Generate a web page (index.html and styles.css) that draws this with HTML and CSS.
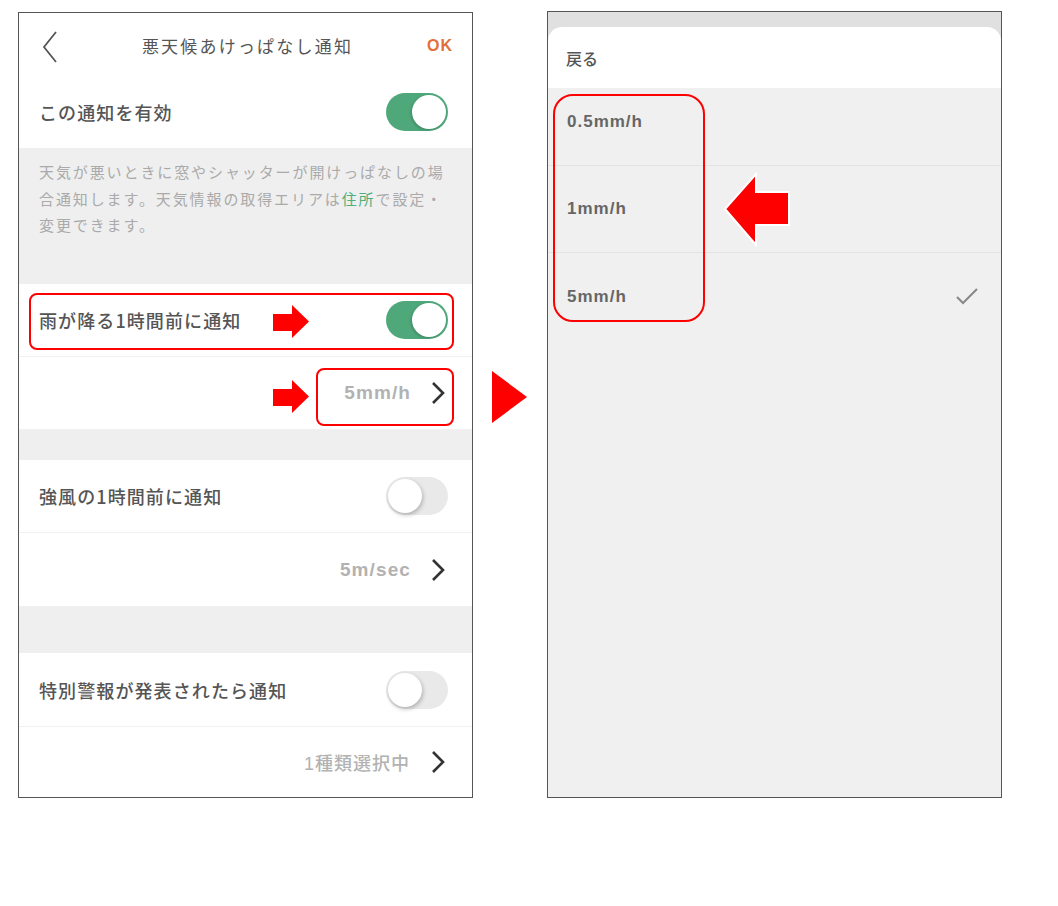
FILE: index.html
```html
<!DOCTYPE html>
<html lang="ja">
<head>
  <meta charset="UTF-8">
  <meta name="viewport" content="width=device-width, initial-scale=1.0">
  <title>悪天候あけっぱなし通知</title>
  <link rel="stylesheet" href="styles.css">
</head>
<body>
  <div class="page">
    <div class="phone settings">
      <header class="nav">
        <svg class="nav-back" width="16" height="32" viewBox="0 0 16 32"><polyline points="14,1 2,16 14,31" fill="none" stroke="#555" stroke-width="1.8"/></svg>
        <h1 class="nav-title">悪天候あけっぱなし通知</h1>
        <span class="nav-ok">OK</span>
      </header>

      <div class="row row-main">
        <span class="row-label">この通知を有効</span>
        <span class="switch is-on"></span>
      </div>

      <p class="note">天気が悪いときに窓やシャッターが開けっぱなしの場<br>合通知します。天気情報の取得エリアは<span class="note-link">住所</span>で設定・<br>変更できます。</p>

      <section class="group group-rain">
        <div class="row">
          <span class="row-label">雨が降る1時間前に通知</span>
          <span class="switch is-on"></span>
        </div>
        <div class="row row-value">
          <span class="value">5mm/h</span>
          <svg class="chev" width="14" height="24" viewBox="0 0 14 24"><polyline points="2,2 12,12 2,22" fill="none" stroke="#333" stroke-width="2.6"/></svg>
        </div>
        <span class="mark mark-row"></span>
        <span class="mark mark-value"></span>
        <svg class="pointer pointer-row" width="36" height="34" viewBox="0 0 36 34"><polygon points="0,9 19,9 19,0 36,16.5 19,33 19,26 0,26" fill="#f00"/></svg>
        <svg class="pointer pointer-value" width="36" height="34" viewBox="0 0 36 34"><polygon points="0,9 19,9 19,0 36,16.5 19,33 19,26 0,26" fill="#f00"/></svg>
      </section>

      <div class="spacer spacer-sm"></div>

      <section class="group">
        <div class="row">
          <span class="row-label">強風の1時間前に通知</span>
          <span class="switch"></span>
        </div>
        <div class="row row-value">
          <span class="value">5m/sec</span>
          <svg class="chev" width="14" height="24" viewBox="0 0 14 24"><polyline points="2,2 12,12 2,22" fill="none" stroke="#333" stroke-width="2.6"/></svg>
        </div>
      </section>

      <div class="spacer spacer-lg"></div>

      <section class="group group-last">
        <div class="row">
          <span class="row-label">特別警報が発表されたら通知</span>
          <span class="switch"></span>
        </div>
        <div class="row row-value">
          <span class="value value-jp">1種類選択中</span>
          <svg class="chev" width="14" height="24" viewBox="0 0 14 24"><polyline points="2,2 12,12 2,22" fill="none" stroke="#333" stroke-width="2.6"/></svg>
        </div>
      </section>
    </div>

    <div class="flow">
      <svg width="36" height="53" viewBox="0 0 36 53"><polygon points="0,0 35,26 0,52" fill="#f00"/></svg>
    </div>

    <div class="phone picker">
      <div class="picker-top">
        <div class="sheet">戻る</div>
      </div>
      <ul class="options">
        <li class="option option-first">0.5mm/h</li>
        <li class="option">1mm/h</li>
        <li class="option option-last">5mm/h
          <svg class="check" width="22" height="17" viewBox="0 0 22 17"><polyline points="1,9 7,15 21,1" fill="none" stroke="#888" stroke-width="2"/></svg>
        </li>
        <span class="mark mark-options"></span>
        <svg class="pointer pointer-back" width="68" height="75" viewBox="0 0 68 75"><polygon points="2,37 33,2 33,20 66,20 66,53 33,53 33,73" fill="#f00" stroke="#fff" stroke-width="2"/></svg>
      </ul>
    </div>
  </div>
</body>
</html>
```

FILE: styles.css
```css
body {
  margin: 0;
  background: #fff;
  font-family: "Liberation Sans", "Noto Sans CJK JP", sans-serif;
  color: #555;
}

.page {
  display: flex;
  align-items: flex-start;
  padding: 11px 0 0 18px;
}

.phone {
  box-sizing: border-box;
  width: 455px;
  border: 1px solid #555;
  overflow: hidden;
}

/* left screen */

.settings {
  height: 786px;
  margin-top: 1px;
  background: #fff;
}

.nav {
  height: 67px;
  display: grid;
  grid-template-columns: 1fr auto 1fr;
  align-items: center;
  padding: 0 19px 0 23px;
}

.nav-back {
  display: block;
}

.nav-title {
  margin: 0 0 2px;
  font-family: "Noto Sans CJK JP", sans-serif;
  font-size: 17px;
  font-weight: 400;
  letter-spacing: 2.2px;
  color: #555;
}

.nav-ok {
  justify-self: end;
  margin-bottom: 2px;
  font-size: 16px;
  font-weight: bold;
  color: #e0703c;
  letter-spacing: 1px;
}

.row {
  box-sizing: border-box;
  height: 73px;
  display: flex;
  align-items: center;
  justify-content: space-between;
  padding: 0 24px 0 20px;
  border-bottom: 1px solid #f1f1f1;
}

.row:last-child {
  border-bottom: none;
}

.row-main {
  height: 68px;
  padding-bottom: 4px;
  border-bottom: none;
}

.row-label {
  font-family: "Noto Sans CJK JP", sans-serif;
  font-size: 18px;
  font-weight: 500;
  letter-spacing: 1.1px;
  color: #555;
}

.row-value {
  justify-content: flex-end;
  padding-right: 27px;
}

.value {
  font-size: 19px;
  font-weight: bold;
  letter-spacing: 1.1px;
  color: #b2b2b2;
  margin-right: 20px;
}

.value-jp {
  font-family: "Liberation Sans", "Noto Sans CJK JP", sans-serif;
  font-size: 18px;
  font-weight: 500;
  letter-spacing: 1px;
  margin-right: 21px;
}

.chev {
  display: block;
}

.switch {
  position: relative;
  box-sizing: border-box;
  width: 62px;
  height: 38px;
  border-radius: 19px;
  background: #e9e9e9;
}

.switch::after {
  content: "";
  position: absolute;
  top: 2px;
  left: 2px;
  width: 34px;
  height: 34px;
  border-radius: 50%;
  background: #fff;
  box-shadow: 1px 2px 4px rgba(0, 0, 0, 0.25);
}

.switch.is-on {
  background: #4fa87a;
}

.switch.is-on::after {
  left: 26px;
  box-shadow: -1px 1px 3px rgba(0, 0, 0, 0.2);
}

.note {
  box-sizing: border-box;
  height: 136px;
  margin: 0;
  padding: 11px 20px 0;
  background: #efefef;
  font-family: "Noto Sans CJK JP", sans-serif;
  font-size: 15px;
  line-height: 26.5px;
  letter-spacing: 1.9px;
  color: #aaa;
}

.note-link {
  color: #4caf7d;
}

.group {
  position: relative;
}

.group-last .row:first-child {
  height: 74px;
}

.group-last .row:last-child {
  height: 69px;
}

.spacer {
  background: #efefef;
}

.spacer-sm {
  height: 30px;
}

.spacer-lg {
  height: 47px;
}

/* red annotations */

.mark {
  position: absolute;
  box-sizing: border-box;
  border: 2px solid #f00;
  border-radius: 8px;
}

.mark-row {
  left: 10px;
  top: 9px;
  width: 425px;
  height: 57px;
}

.mark-value {
  left: 297px;
  top: 84px;
  width: 138px;
  height: 58px;
}

.pointer {
  position: absolute;
}

.pointer-row {
  left: 254px;
  top: 21px;
}

.pointer-value {
  left: 254px;
  top: 96px;
}

.flow {
  width: 74px;
  padding: 360px 0 0 19px;
  box-sizing: border-box;
}

.flow svg {
  display: block;
}

/* right screen */

.picker {
  height: 787px;
  background: #f0f0f0;
}

.picker-top {
  background: #e0e0e0;
  padding-top: 15px;
}

.sheet {
  height: 61px;
  display: flex;
  align-items: center;
  padding-left: 18px;
  background: #fff;
  border-radius: 14px 14px 0 0;
  font-family: "Noto Sans CJK JP", sans-serif;
  font-size: 16px;
  font-weight: 500;
  color: #555;
}

.options {
  position: relative;
  list-style: none;
  margin: 0;
  padding: 0;
}

.option {
  box-sizing: border-box;
  height: 87px;
  display: flex;
  align-items: center;
  justify-content: space-between;
  padding: 0 23px 0 19px;
  border-bottom: 1px solid #e3e3e3;
  font-size: 17px;
  font-weight: bold;
  letter-spacing: 1px;
  color: #666;
}

.option-first {
  height: 78px;
  padding-bottom: 9px;
}

.option-last {
  border-bottom: none;
}

.check {
  display: block;
}

.mark-options {
  left: 5px;
  top: 6px;
  width: 152px;
  height: 228px;
  border-radius: 20px;
}

.pointer-back {
  left: 175px;
  top: 84px;
}
```
